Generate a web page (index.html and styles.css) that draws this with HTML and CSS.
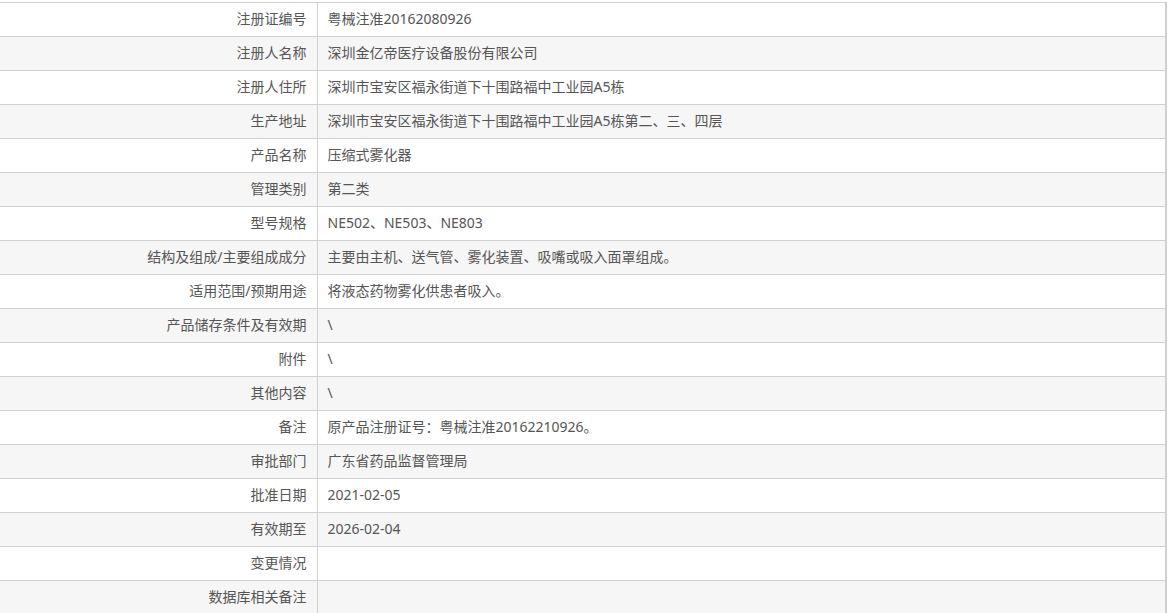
FILE: index.html
```html
<!DOCTYPE html>
<html lang="zh-CN">
<head>
<meta charset="utf-8">
<title>注册信息</title>
<link rel="stylesheet" href="styles.css">
</head>
<body>
<table class="info">
<tbody>
<tr><th>注册证编号</th><td>粤械注准20162080926</td></tr>
<tr><th>注册人名称</th><td>深圳金亿帝医疗设备股份有限公司</td></tr>
<tr><th>注册人住所</th><td>深圳市宝安区福永街道下十围路福中工业园A5栋</td></tr>
<tr><th>生产地址</th><td>深圳市宝安区福永街道下十围路福中工业园A5栋第二、三、四层</td></tr>
<tr><th>产品名称</th><td>压缩式雾化器</td></tr>
<tr><th>管理类别</th><td>第二类</td></tr>
<tr><th>型号规格</th><td>NE502、NE503、NE803</td></tr>
<tr><th>结构及组成/主要组成成分</th><td>主要由主机、送气管、雾化装置、吸嘴或吸入面罩组成。</td></tr>
<tr><th>适用范围/预期用途</th><td>将液态药物雾化供患者吸入。</td></tr>
<tr><th>产品储存条件及有效期</th><td>\</td></tr>
<tr><th>附件</th><td>\</td></tr>
<tr><th>其他内容</th><td>\</td></tr>
<tr><th>备注</th><td>原产品注册证号：粤械注准20162210926。</td></tr>
<tr><th>审批部门</th><td>广东省药品监督管理局</td></tr>
<tr><th>批准日期</th><td>2021-02-05</td></tr>
<tr><th>有效期至</th><td>2026-02-04</td></tr>
<tr><th>变更情况</th><td></td></tr>
<tr><th>数据库相关备注</th><td></td></tr>
</tbody>
</table>
</body>
</html>
```
FILE: styles.css
```css
html, body {
  margin: 0;
  padding: 0;
  background: #fff;
}
body {
  padding-top: 2px;
  font-family: "Noto Sans", "Noto Sans CJK SC", "Microsoft YaHei", sans-serif;
  font-size: 14px;
  color: #555;
}
.info {
  border-collapse: collapse;
  width: 1167px;
  table-layout: fixed;
  border-top: 1px solid #d0d0d0;
  border-right: 2px solid #d0d0d0;
}
.info tr {
  height: 34px;
}
.info tr:nth-child(even) {
  background: #f6f6f6;
}
.info th,
.info td {
  box-sizing: border-box;
  border-bottom: 1px solid #d0d0d0;
  height: 34px;
  padding: 0 10px 2px;
  font-weight: normal;
  line-height: 20px;
  white-space: nowrap;
}
.info th {
  width: 317px;
  text-align: right;
  border-right: 1px solid #d0d0d0;
}
.info td {
  text-align: left;
}
```
